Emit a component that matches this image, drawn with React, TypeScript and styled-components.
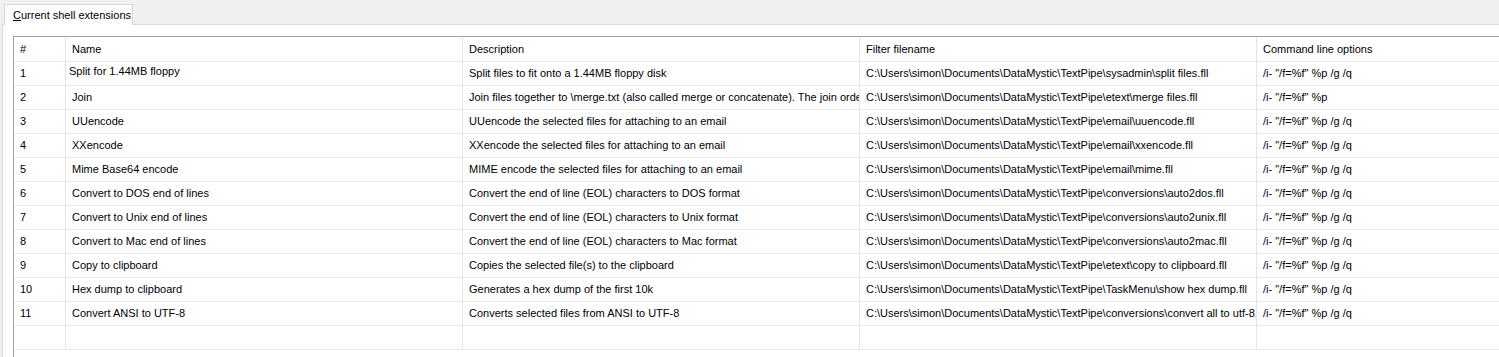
import * as React from "react";
import styled, { createGlobalStyle } from "styled-components";

const GlobalStyle = createGlobalStyle`
  html, body {
    margin: 0;
    padding: 0;
    overflow: hidden;
    background: #f0f0f0;
  }
  body {
    font-family: "Liberation Sans", Arial, sans-serif;
    font-size: 11px;
    color: #000;
  }
`

const Page = styled.div`
  display: flex;
  flex-direction: column;
  height: 357px;
  padding-left: 2px;
  box-sizing: border-box;
`

const TabStrip = styled.div`
  display: flex;
  align-items: flex-end;
  height: 25px;
  flex-shrink: 0;
`

const StripFiller = styled.div<{ $grow?: boolean }>`
  height: 0;
  border-bottom: 1px solid #d9d9d9;
  width: 2px;
  ${({ $grow }) => $grow && "flex: 1;"}
`

const Tab = styled.div`
  box-sizing: border-box;
  width: 129px;
  height: 21px;
  display: flex;
  align-items: center;
  padding-left: 8px;
  background: #fff;
  border: 1px solid #d9d9d9;
  border-bottom: none;
  white-space: nowrap;
  u {
    text-decoration: underline;
  }
`

const Panel = styled.div`
  flex: 1;
  display: flex;
  background: #fff;
  border-left: 1px solid #d9d9d9;
  padding: 11px 0 0 10px;
  min-height: 0;
`

const Grid = styled.div`
  flex: 1;
  border-top: 1px solid #a0a0a0;
  border-left: 1px solid #a0a0a0;
  background: #fff;
  display: flex;
  flex-direction: column;
`

const Row = styled.div<{ $header?: boolean }>`
  display: grid;
  grid-template-columns: 52px 397px 397px 397px 320px;
  height: ${({ $header }) => ($header ? 25 : 24)}px;
  flex-shrink: 0;
`

const Cell = styled.div<{ $editing?: boolean }>`
  box-sizing: border-box;
  display: flex;
  align-items: center;
  padding-left: ${({ $editing }) => ($editing ? 3 : 6)}px;
  padding-bottom: ${({ $editing }) => ($editing ? 6 : 1)}px;
  border-right: 1px solid #e4e4e4;
  border-bottom: 1px solid #ececec;
  white-space: nowrap;
  overflow: hidden;
`

const columns = ["#", "Name", "Description", "Filter filename", "Command line options"]

const base = "C:\\Users\\simon\\Documents\\DataMystic\\TextPipe\\"

const rows = [
  ["Split for 1.44MB floppy", "Split files to fit onto a 1.44MB floppy disk", "sysadmin\\split files.fll", '/i- "/f=%f" %p /g /q'],
  ["Join", "Join files together to \\merge.txt (also called merge or concatenate). The join orde", "etext\\merge files.fll", '/i- "/f=%f" %p'],
  ["UUencode", "UUencode the selected files for attaching to an email", "email\\uuencode.fll", '/i- "/f=%f" %p /g /q'],
  ["XXencode", "XXencode the selected files for attaching to an email", "email\\xxencode.fll", '/i- "/f=%f" %p /g /q'],
  ["Mime Base64 encode", "MIME encode the selected files for attaching to an email", "email\\mime.fll", '/i- "/f=%f" %p /g /q'],
  ["Convert to DOS end of lines", "Convert the end of line (EOL) characters to DOS format", "conversions\\auto2dos.fll", '/i- "/f=%f" %p /g /q'],
  ["Convert to Unix end of lines", "Convert the end of line (EOL) characters to Unix format", "conversions\\auto2unix.fll", '/i- "/f=%f" %p /g /q'],
  ["Convert to Mac end of lines", "Convert the end of line (EOL) characters to Mac format", "conversions\\auto2mac.fll", '/i- "/f=%f" %p /g /q'],
  ["Copy to clipboard", "Copies the selected file(s) to the clipboard", "etext\\copy to clipboard.fll", '/i- "/f=%f" %p /g /q'],
  ["Hex dump to clipboard", "Generates a hex dump of the first 10k", "TaskMenu\\show hex dump.fll", '/i- "/f=%f" %p /g /q'],
  ["Convert ANSI to UTF-8", "Converts selected files from ANSI to UTF-8", "conversions\\convert all to utf-8.", '/i- "/f=%f" %p /g /q'],
]

export default function App() {
  return (
    <>
      <GlobalStyle />
      <Page>
        <TabStrip>
          <StripFiller />
          <Tab>
            <span><u>C</u>urrent shell extensions</span>
          </Tab>
          <StripFiller $grow />
        </TabStrip>
        <Panel>
          <Grid>
            <Row $header>
              {columns.map((c) => (
                <Cell key={c}>{c}</Cell>
              ))}
            </Row>
            {rows.map((r, i) => (
              <Row key={i}>
                <Cell>{i + 1}</Cell>
                <Cell $editing={i === 0}>{r[0]}</Cell>
                <Cell>{r[1]}</Cell>
                <Cell>{base + r[2]}</Cell>
                <Cell>{r[3]}</Cell>
              </Row>
            ))}
            <Row>
              <Cell />
              <Cell />
              <Cell />
              <Cell />
              <Cell />
            </Row>
          </Grid>
        </Panel>
      </Page>
    </>
  )
}
